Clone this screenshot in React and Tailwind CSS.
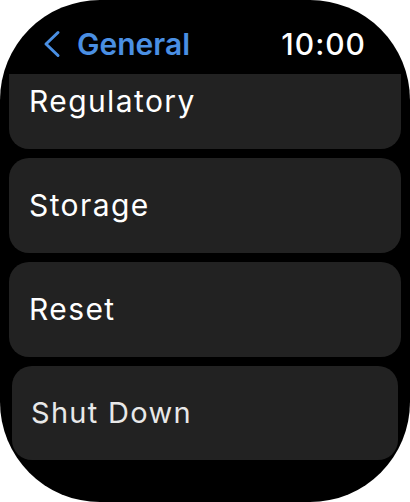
import React from "react";

const items = ["Regulatory", "Storage", "Reset", "Shut Down"];

function Chevron() {
    return (
        <svg width="20" height="28" viewBox="0 0 20 28" fill="none">
            <path
                d="M17 2.5 L5 14 L17 25.5"
                stroke="#4a8fe3"
                strokeWidth="3"
                strokeLinecap="round"
                strokeLinejoin="round"
            />
        </svg>
    );
}

export default function App() {
    return (
        <div className="w-[410px] h-[502px] bg-white" style={{ fontFamily: "Inter, 'Noto Sans', sans-serif" }}>
            <div className="w-full h-full bg-black rounded-[100px] overflow-hidden flex flex-col">
                <div className="h-[74px] shrink-0 flex items-end justify-between pl-[41px] pr-[44px] pb-[12px]">
                    <div className="flex items-center gap-[16px] text-[#4a8fe3]">
                        <Chevron />
                        <span className="text-[30px] leading-[36px] font-semibold">General</span>
                    </div>
                    <span className="text-[30px] leading-[36px] font-medium tracking-[1px] text-white">10:00</span>
                </div>
                <div className="flex-1 overflow-hidden">
                    <div className="-mt-[20px] flex flex-col gap-[9px]">
                        {items.map((name, i) => (
                            <div
                                key={name}
                                className={
                                    i === 3
                                        ? "mx-[12px] h-[94px] rounded-[20px] bg-[#222222] flex items-center pl-[19px]"
                                        : "mx-[9px] h-[95px] rounded-[20px] bg-[#222222] flex items-center pl-[20px]"
                                }
                            >
                                <span
                                    className={
                                        i === 3
                                            ? "text-[29px] tracking-[1.3px] text-[#e8e8e8]"
                                            : "text-[30px] tracking-[1.4px] text-white"
                                    }
                                >
                                    {name}
                                </span>
                            </div>
                        ))}
                    </div>
                </div>
            </div>
        </div>
    );
}
